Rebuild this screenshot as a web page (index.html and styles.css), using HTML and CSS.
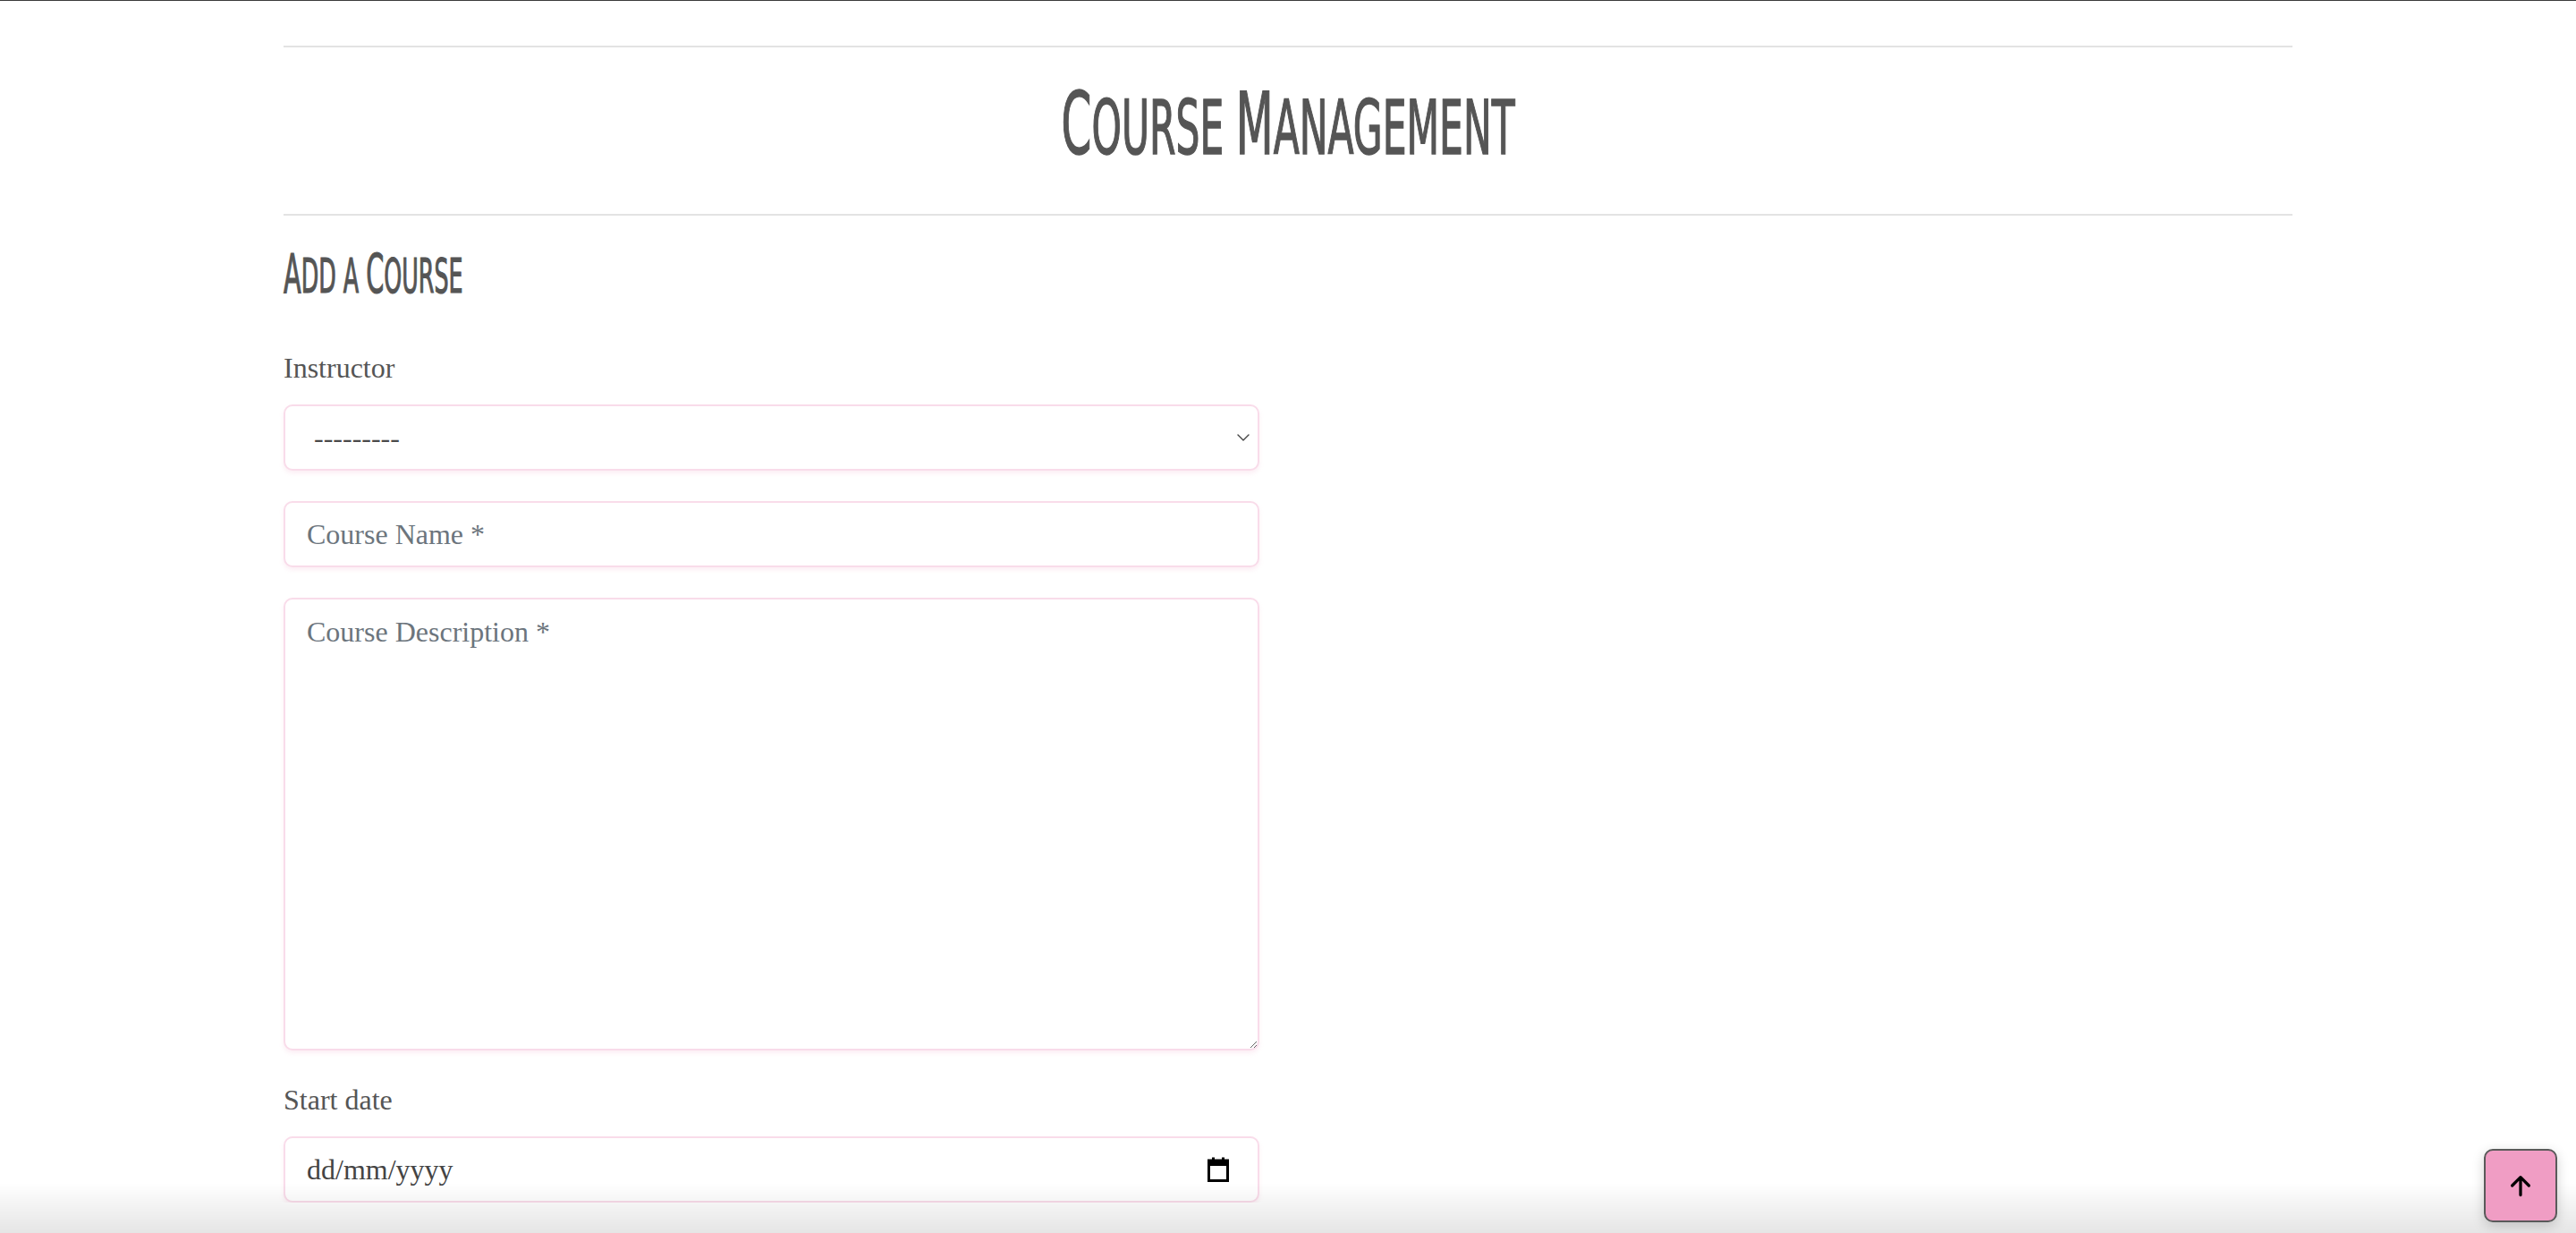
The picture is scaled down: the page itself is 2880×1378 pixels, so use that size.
FILE: index.html
```html
<!DOCTYPE html>
<html lang="en">
<head>
<meta charset="utf-8">
<title>Course Management</title>
<link rel="stylesheet" href="styles.css">
</head>
<body>
<main class="container">
  <hr class="rule">
  <h1 class="page-title"><span class="title-text"><span class="cap">C</span>ourse <span class="cap">M</span>anagement</span></h1>
  <hr class="rule">
  <h2 class="section-title"><span class="title-text"><span class="cap">A</span>dd a <span class="cap">C</span>ourse</span></h2>
  <form class="course-form">
    <label class="form-label" for="instructor">Instructor</label>
    <div class="select-wrap">
      <select id="instructor" class="form-control form-select">
        <option>---------</option>
      </select>
      <svg class="chevron" viewBox="0 0 16 16" width="16" height="16" aria-hidden="true"><path d="M2 5l6 6 6-6" fill="none" stroke="#444" stroke-width="1.4" stroke-linecap="round" stroke-linejoin="round"/></svg>
    </div>
    <input class="form-control field-gap" type="text" placeholder="Course Name *">
    <textarea class="form-control field-gap textarea" placeholder="Course Description *"></textarea>
    <label class="form-label label-gap">Start date</label>
    <div class="form-control date-field">
      <span class="date-text">dd/mm/yyyy</span>
      <svg class="calendar" viewBox="0 0 24 28" width="24" height="28" aria-hidden="true">
        <rect x="1.5" y="4" width="21" height="22.5" fill="none" stroke="#000" stroke-width="3"/>
        <rect x="1.5" y="4" width="21" height="6" fill="#000"/>
        <rect x="5" y="0.5" width="3" height="5" fill="#000"/>
        <rect x="16" y="0.5" width="3" height="5" fill="#000"/>
      </svg>
    </div>
  </form>
</main>
<div class="bottom-fade"></div>
<button class="to-top" type="button" aria-label="Back to top">
  <svg viewBox="0 0 24 24" width="28" height="28" aria-hidden="true"><path d="M12 21V4M4 12l8-8 8 8" fill="none" stroke="#000" stroke-width="2.8" stroke-linecap="round" stroke-linejoin="round"/></svg>
</button>
</body>
</html>
```
FILE: styles.css
```css
html, body {
  margin: 0;
  padding: 0;
  background: #ffffff;
}
body {
  border-top: 1px solid #3c3c3c;
  font-family: "Liberation Serif", "Times New Roman", serif;
  color: #555555;
}
.container {
  width: 2246px;
  margin: 0 auto;
}
.rule {
  margin: 0;
  border: 0;
  height: 2px;
  background: #e3e3e3;
}
.container > .rule:first-child {
  margin-top: 50px;
}
.page-title {
  box-sizing: border-box;
  margin: 0;
  height: 186px;
  padding-bottom: 14px;
  display: flex;
  align-items: center;
  justify-content: center;
  font-family: "Liberation Sans Narrow", "DejaVu Sans Condensed", "Liberation Sans", sans-serif;
  font-weight: normal;
  font-size: 84px;
  line-height: 1;
  color: #555555;
  text-transform: uppercase;
  -webkit-text-stroke: 1.5px #555555;
}
.title-text {
  display: inline-block;
  transform: scaleX(0.562);
  white-space: nowrap;
}
.page-title .cap {
  font-size: 96px;
}
.section-title {
  margin: 35px 0 0;
  height: 60px;
  font-family: "Liberation Sans Narrow", "DejaVu Sans Condensed", "Liberation Sans", sans-serif;
  font-weight: normal;
  font-size: 53px;
  line-height: 60px;
  color: #555555;
  text-transform: uppercase;
  -webkit-text-stroke: 1.2px #555555;
}
.section-title .title-text {
  transform: scaleX(0.532);
  transform-origin: left center;
}
.section-title .cap {
  font-size: 60px;
}
.course-form {
  width: 1091px;
  display: flex;
  flex-direction: column;
  margin-top: 51px;
}
.form-label {
  font-size: 32px;
  line-height: 48px;
  color: #555555;
  margin-bottom: 17px;
}
.label-gap {
  margin-top: 31px;
}
.form-control {
  box-sizing: border-box;
  width: 100%;
  margin: 0;
  height: 74px;
  padding: 11px 24px;
  font-family: "Liberation Serif", "Times New Roman", serif;
  font-size: 32px;
  line-height: 48px;
  color: #444444;
  background: #ffffff;
  border: 2px solid #f9dcea;
  border-radius: 10px;
  box-shadow: 0 3px 5px rgba(240, 160, 196, 0.18);
  outline: none;
}
.form-control::placeholder {
  color: #6c757d;
  opacity: 1;
}
.select-wrap {
  position: relative;
}
.form-select {
  appearance: none;
  -webkit-appearance: none;
  padding-left: 32px;
  color: #4a4a4a;
}
.chevron {
  position: absolute;
  right: 10px;
  top: 29px;
  pointer-events: none;
}
.field-gap {
  margin-top: 34px;
}
.textarea {
  height: 506px;
  resize: vertical;
  padding-top: 12px;
}
.date-field {
  display: flex;
  align-items: center;
  justify-content: space-between;
  padding-right: 32px;
}
.date-text {
  color: #444444;
}
.calendar {
  display: block;
}
.bottom-fade {
  position: fixed;
  left: 0;
  right: 0;
  bottom: 0;
  height: 56px;
  background: linear-gradient(to bottom, rgba(0,0,0,0), rgba(0,0,0,0.1));
  pointer-events: none;
}
.to-top {
  position: fixed;
  right: 21px;
  bottom: 12px;
  width: 82px;
  height: 82px;
  padding: 0;
  display: flex;
  align-items: center;
  justify-content: center;
  background: #f09dc4;
  border: 2px solid #5a5a5a;
  border-radius: 10px;
  box-shadow: 0 4px 14px rgba(0, 0, 0, 0.18);
  cursor: pointer;
}
.to-top svg {
  display: block;
}
```
